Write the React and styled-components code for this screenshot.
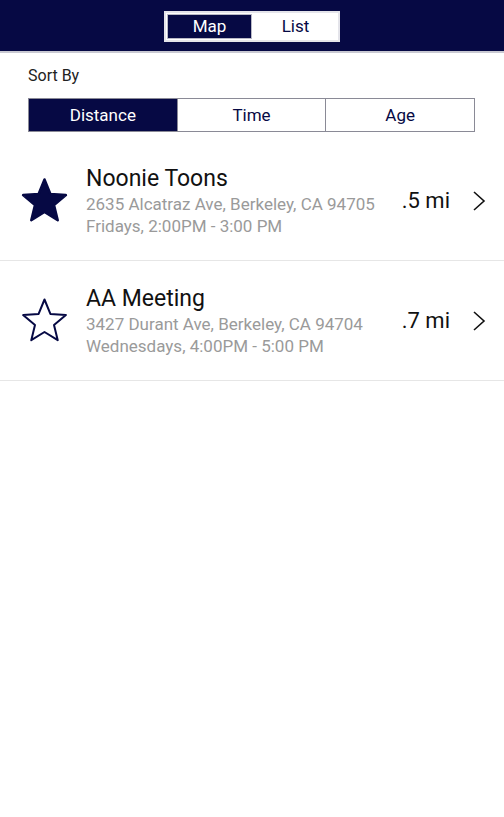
import React, { useState } from 'react'
import styled, { createGlobalStyle } from 'styled-components'

const NAVY = '#060944'

const GlobalStyle = createGlobalStyle`
  body {
    margin: 0;
    background: #fff;
    font-family: Roboto, "Liberation Sans", sans-serif;
  }
`

const Page = styled.div`
  width: 504px;
  min-height: 817px;
  background: #fff;
`

const Header = styled.div`
  height: 51px;
  background: ${NAVY};
  border-bottom: 2px solid #c9c9d2;
  display: flex;
  align-items: center;
  justify-content: center;
`

const Toggle = styled.div`
  display: flex;
  width: 176px;
  height: 31px;
  box-sizing: border-box;
  border: 2px solid #e4e4ea;
  background: #fff;
  margin-top: 1px;
`

const ToggleButton = styled.div`
  flex: 1;
  display: flex;
  align-items: center;
  justify-content: center;
  font-size: 17px;
  color: ${p => (p.active ? '#fff' : NAVY)};
  background: ${p => (p.active ? NAVY : '#fff')};
  border: ${p => (p.active ? '1px solid #b9b9c6' : '1px solid transparent')};
  margin: ${p => (p.active ? '1px' : '0')};
`

const SortLabel = styled.div`
  padding: 13px 28px 0;
  font-size: 16px;
  color: #222;
  height: 20px;
`

const SortBar = styled.div`
  display: flex;
  margin: 12px 29px 0 28px;
  height: 34px;
  box-sizing: border-box;
  border: 1px solid #8a8a96;
`

const SortButton = styled.div`
  flex: 1;
  display: flex;
  align-items: center;
  justify-content: center;
  font-size: 17px;
  color: ${p => (p.active ? '#fff' : NAVY)};
  background: ${p => (p.active ? NAVY : '#fff')};
  & + & {
    border-left: 1px solid #8a8a96;
  }
`

const List = styled.div`
  padding-top: 9px;
`

const Row = styled.div`
  display: flex;
  align-items: center;
  height: 119px;
  border-bottom: 1px solid #e6e6e6;
`

const StarBox = styled.div`
  width: 86px;
  display: flex;
  padding-left: 20px;
  box-sizing: border-box;
`

const Info = styled.div`
  flex: 1;
  display: flex;
  flex-direction: column;
  margin-top: 2px;
`

const Title = styled.div`
  font-size: 23px;
  color: #111;
  line-height: 26px;
  margin-bottom: 1px;
`

const Sub = styled.div`
  font-size: 17px;
  color: #9a9a9a;
  line-height: 22px;
`

const Distance = styled.div`
  font-size: 22px;
  color: #111;
  margin-right: 22px;
`

const Chevron = styled.div`
  width: 17px;
  margin-right: 15px;
  display: flex;
`

const starPoints = (() => {
  const cx = 24.5
  const cy = 25
  const R = 22.5
  const r = 10
  const pts = []
  for (let i = 0; i < 10; i++) {
    const a = (Math.PI / 5) * i - Math.PI / 2
    const rad = i % 2 === 0 ? R : r
    pts.push(`${(cx + rad * Math.cos(a)).toFixed(2)},${(cy + rad * Math.sin(a)).toFixed(2)}`)
  }
  return pts.join(' ')
})()

const Star = ({ filled }) => (
  <svg width="49" height="48" viewBox="0 0 49 48">
    <polygon
      points={starPoints}
      fill={filled ? NAVY : 'none'}
      stroke={NAVY}
      strokeWidth={filled ? 2.5 : 2}
      strokeLinejoin="round"
    />
  </svg>
)

const ChevronIcon = () => (
  <svg width="14" height="20" viewBox="0 0 14 20">
    <path d="M2 1 L12 10 L2 19" fill="none" stroke="#111" strokeWidth="1.6" />
  </svg>
)

const meetings = [
  {
    name: 'Noonie Toons',
    address: '2635 Alcatraz Ave, Berkeley, CA 94705',
    time: 'Fridays, 2:00PM - 3:00 PM',
    distance: '.5 mi',
    fav: true,
  },
  {
    name: 'AA Meeting',
    address: '3427 Durant Ave, Berkeley, CA 94704',
    time: 'Wednesdays, 4:00PM - 5:00 PM',
    distance: '.7 mi',
    fav: false,
  },
]

export default function App() {
  const [view, setView] = useState('Map')
  const [sort, setSort] = useState('Distance')
  return (
    <Page>
      <GlobalStyle />
      <Header>
        <Toggle>
          {['Map', 'List'].map(v => (
            <ToggleButton key={v} active={view === v} onClick={() => setView(v)}>
              {v}
            </ToggleButton>
          ))}
        </Toggle>
      </Header>
      <SortLabel>Sort By</SortLabel>
      <SortBar>
        {['Distance', 'Time', 'Age'].map(s => (
          <SortButton key={s} active={sort === s} onClick={() => setSort(s)}>
            {s}
          </SortButton>
        ))}
      </SortBar>
      <List>
        {meetings.map(m => (
          <Row key={m.name}>
            <StarBox>
              <Star filled={m.fav} />
            </StarBox>
            <Info>
              <Title>{m.name}</Title>
              <Sub>{m.address}</Sub>
              <Sub>{m.time}</Sub>
            </Info>
            <Distance>{m.distance}</Distance>
            <Chevron>
              <ChevronIcon />
            </Chevron>
          </Row>
        ))}
      </List>
    </Page>
  )
}
